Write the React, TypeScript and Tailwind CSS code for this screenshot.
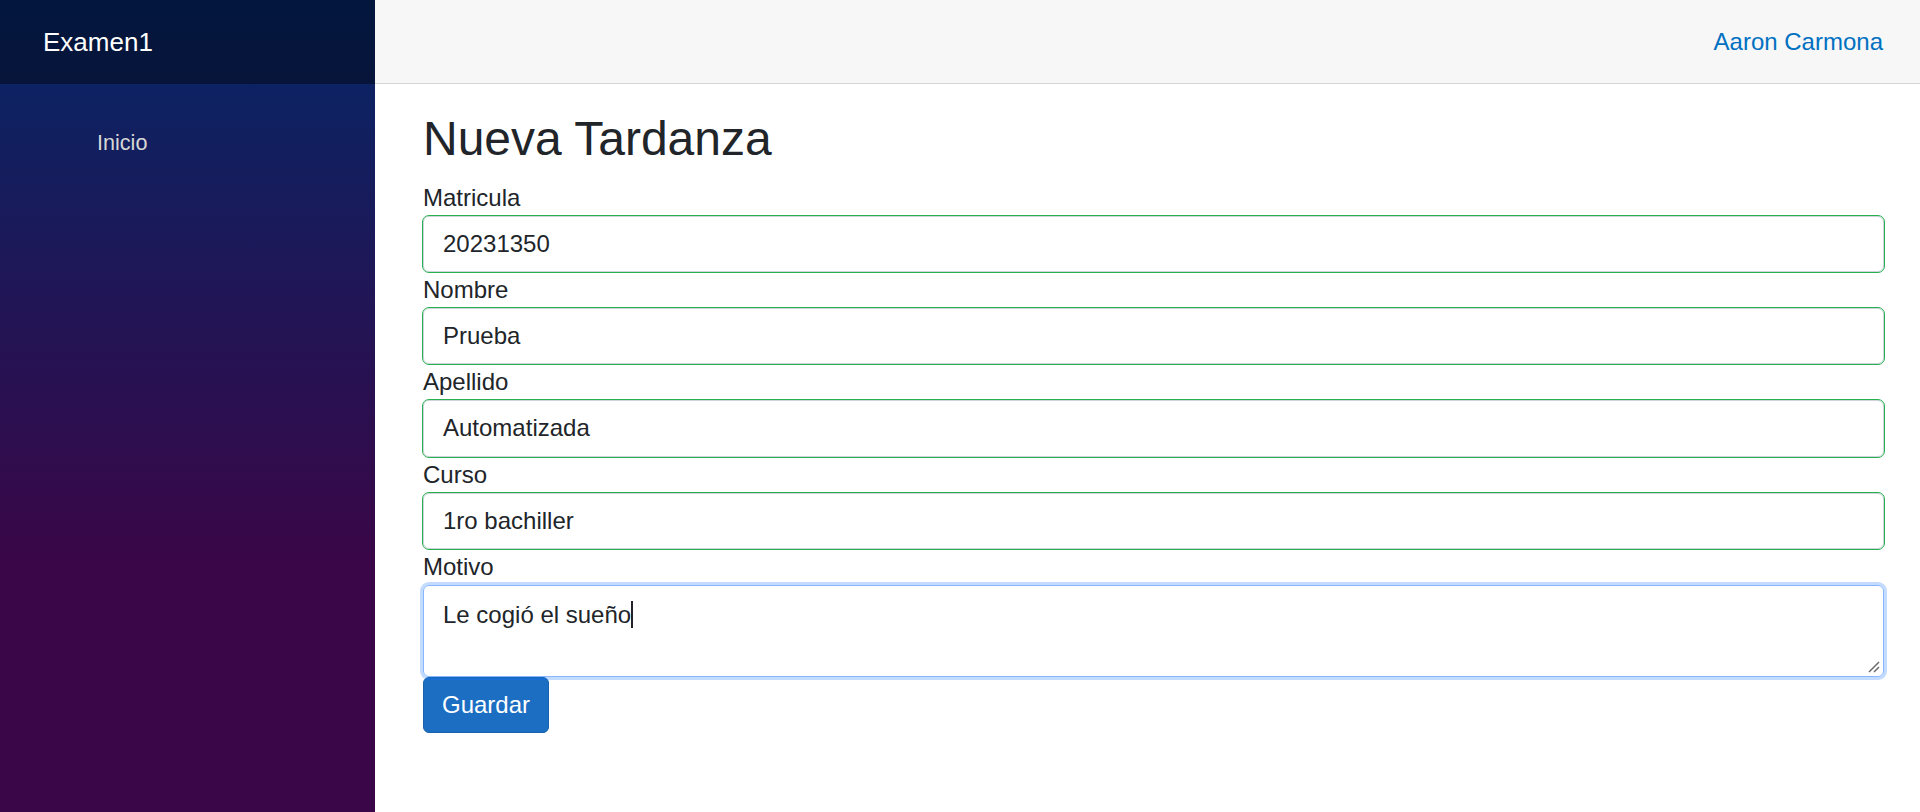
import React from "react";

const fields = [
  { label: "Matricula", value: "20231350" },
  { label: "Nombre", value: "Prueba" },
  { label: "Apellido", value: "Automatizada" },
  { label: "Curso", value: "1ro bachiller" },
];

export default function App() {
  return (
    <div
      className="flex h-[812px] w-[1920px] overflow-hidden bg-white text-[#212529]"
      style={{ fontFamily: '"Liberation Sans", Arial, sans-serif' }}
    >
      {/* Sidebar */}
      <aside className="flex w-[375px] shrink-0 flex-col bg-[linear-gradient(180deg,#052767_0%,#3a0647_70%)]">
        <div className="flex h-[84px] items-center bg-black/40 pl-[43px]">
          <span className="text-[26px] leading-none text-white">Examen1</span>
        </div>
        <nav className="pt-[30px]">
          <div className="flex h-[58px] items-center pl-[97px] text-[21.6px] text-[#d7d7d7]">
            Inicio
          </div>
        </nav>
      </aside>

      {/* Main */}
      <main className="flex flex-1 flex-col">
        <div className="flex h-[84px] shrink-0 items-center justify-end border-b border-[#d6d5d5] bg-[#f7f7f7] pr-[37px]">
          <a className="text-[24px] text-[#0071c1]">Aaron Carmona</a>
        </div>

        <article className="pl-[48px] pr-[36px] pt-[26px]">
          <h1 className="mb-[12px] text-[48px] font-normal leading-[1.2]">Nueva Tardanza</h1>

          {fields.map((f) => (
            <div key={f.label}>
              <label className="block text-[24px] leading-[36px]">{f.label}</label>
              <input
                readOnly
                defaultValue={f.value}
                className="block h-[56.33px] w-full rounded-[6px] border border-[#ced4da] px-[19px] text-[24px] text-[#212529] outline-[1.5px] outline-[#26b050]"
              />
            </div>
          ))}

          <div>
            <label className="block text-[24px] leading-[36px]">Motivo</label>
            <div className="relative h-[92px] w-full rounded-[6px] border border-[#86b7fe] px-[19px] py-[10px] text-[24px] leading-[36px] shadow-[0_0_0_3px_rgba(13,110,253,0.25)]">
              <span>Le cogió el sueño</span>
              <span className="inline-block h-[27px] w-[2px] translate-y-[5px] bg-[#212529]" />
              <svg
                className="absolute bottom-[3px] right-[3px]"
                width="12"
                height="12"
                viewBox="0 0 12 12"
              >
                <path d="M1 11 L11 1 M6 11 L11 6" stroke="#6b6b6b" strokeWidth="1.5" />
              </svg>
            </div>
          </div>

          <button className="h-[56px] rounded-[6px] border border-[#1861ac] bg-[#1b6ec2] px-[18px] text-[24px] text-white">
            Guardar
          </button>
        </article>
      </main>
    </div>
  );
}
